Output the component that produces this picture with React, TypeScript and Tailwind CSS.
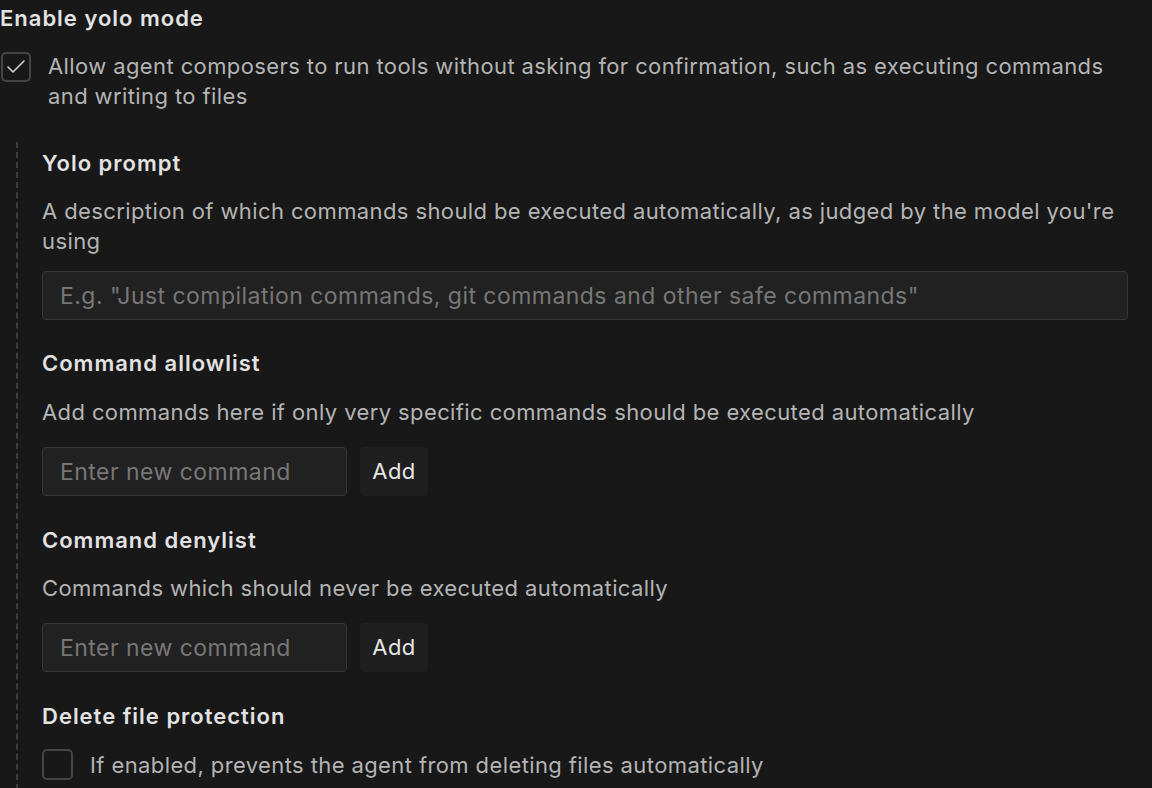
import { Check } from "lucide-react";

const Title = ({ children }: { children: string }) => (
  <div className="text-[22px] leading-[30px] font-semibold tracking-[0.045em] text-[#e2e2e2]">{children}</div>
);

const Desc = ({ children }: { children: string }) => (
  <div className="text-[22px] leading-[30px] tracking-[0.018em] text-[#b4b4b4]">{children}</div>
);

const inputCls =
  "h-[49px] rounded-[4px] border border-[#363636] bg-[#212121] px-[17px] text-[23px] tracking-[0.02em] text-[#ddd] placeholder:text-[#777] outline-none";

const CommandInput = () => (
  <div className="flex gap-[13px]">
    <input className={`w-[305px] ${inputCls}`} placeholder="Enter new command" />
    <button className="h-[49px] w-[68px] rounded-[4px] bg-[#1f1f1f] text-[22px] tracking-[0.02em] text-[#e6e6e6]">Add</button>
  </div>
);

const App = () => {
  return (
    <div
      className="h-[788px] w-[1152px] overflow-hidden bg-[#181818]"
      style={{ fontFamily: "Inter, 'Noto Sans', sans-serif" }}
    >
      <div className="pt-[3px]">
        <Title>Enable yolo mode</Title>
        <div className="mt-[18px] flex gap-[17px] pr-[30px]">
          <div className="mt-[1px] ml-[1px] flex h-[30px] w-[30px] shrink-0 items-center justify-center rounded-[5px] border-2 border-[#454545]">
            <Check className="h-[24px] w-[24px] text-[#d8d8d8]" strokeWidth={1.5} />
          </div>
          <Desc>Allow agent composers to run tools without asking for confirmation, such as executing commands and writing to files</Desc>
        </div>
        <div className="mt-[31px] ml-[16px] border-l-2 border-dashed border-[#3c3c3c] pl-[24px] pt-[6px] pr-[24px] pb-[40px]">
          <Title>Yolo prompt</Title>
          <div className="mt-[18px]">
            <Desc>A description of which commands should be executed automatically, as judged by the model you're using</Desc>
          </div>
          <input
            className={`mt-[15px] block w-full ${inputCls}`}
            placeholder={'E.g. "Just compilation commands, git commands and other safe commands"'}
          />
          <div className="mt-[28px]">
            <Title>Command allowlist</Title>
          </div>
          <div className="mt-[19px]">
            <Desc>Add commands here if only very specific commands should be executed automatically</Desc>
          </div>
          <div className="mt-[20px]">
            <CommandInput />
          </div>
          <div className="mt-[29px]">
            <Title>Command denylist</Title>
          </div>
          <div className="mt-[18px]">
            <Desc>Commands which should never be executed automatically</Desc>
          </div>
          <div className="mt-[20px]">
            <CommandInput />
          </div>
          <div className="mt-[29px]">
            <Title>Delete file protection</Title>
          </div>
          <div className="mt-[18px] flex items-center gap-[17px]">
            <div className="h-[31px] w-[31px] shrink-0 rounded-[5px] border-2 border-[#454545]" />
            <Desc>If enabled, prevents the agent from deleting files automatically</Desc>
          </div>
        </div>
      </div>
    </div>
  );
};

export default App;
